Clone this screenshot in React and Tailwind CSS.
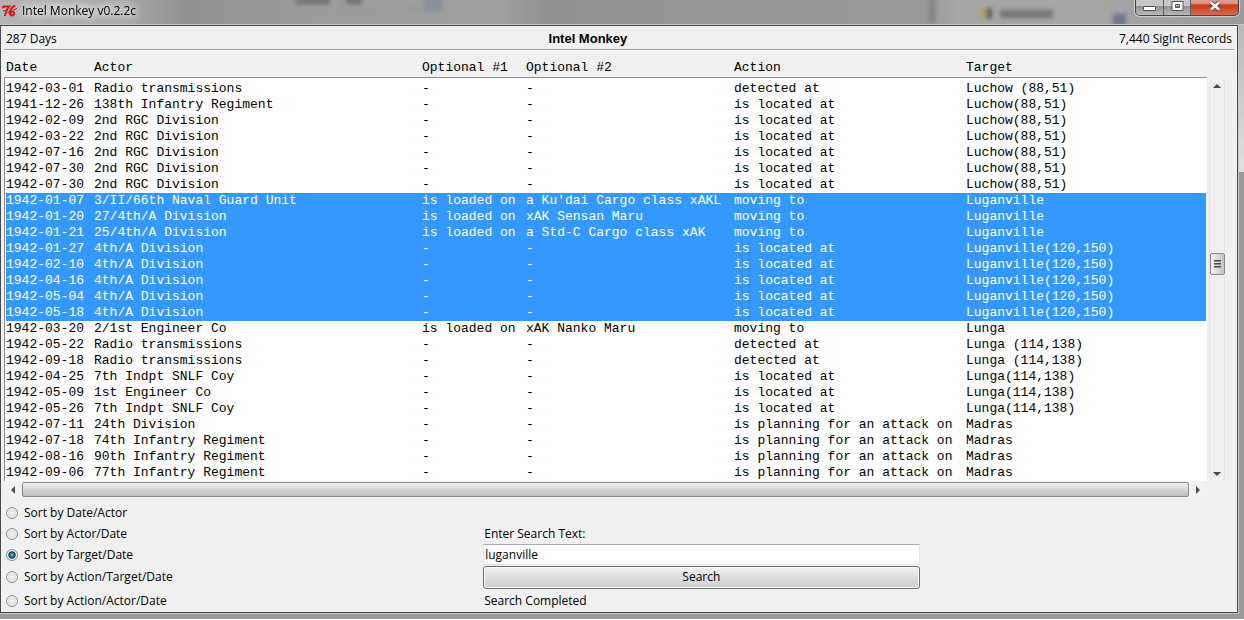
import React, { useState } from "react";

const rows = [
  ["1942-03-01", "Radio transmissions", "-", "-", "detected at", "Luchow (88,51)"],
  ["1941-12-26", "138th Infantry Regiment", "-", "-", "is located at", "Luchow(88,51)"],
  ["1942-02-09", "2nd RGC Division", "-", "-", "is located at", "Luchow(88,51)"],
  ["1942-03-22", "2nd RGC Division", "-", "-", "is located at", "Luchow(88,51)"],
  ["1942-07-16", "2nd RGC Division", "-", "-", "is located at", "Luchow(88,51)"],
  ["1942-07-30", "2nd RGC Division", "-", "-", "is located at", "Luchow(88,51)"],
  ["1942-07-30", "2nd RGC Division", "-", "-", "is located at", "Luchow(88,51)"],
  ["1942-01-07", "3/II/66th Naval Guard Unit", "is loaded on", "a Ku'dai Cargo class xAKL", "moving to", "Luganville"],
  ["1942-01-20", "27/4th/A Division", "is loaded on", "xAK Sensan Maru", "moving to", "Luganville"],
  ["1942-01-21", "25/4th/A Division", "is loaded on", "a Std-C Cargo class xAK", "moving to", "Luganville"],
  ["1942-01-27", "4th/A Division", "-", "-", "is located at", "Luganville(120,150)"],
  ["1942-02-10", "4th/A Division", "-", "-", "is located at", "Luganville(120,150)"],
  ["1942-04-16", "4th/A Division", "-", "-", "is located at", "Luganville(120,150)"],
  ["1942-05-04", "4th/A Division", "-", "-", "is located at", "Luganville(120,150)"],
  ["1942-05-18", "4th/A Division", "-", "-", "is located at", "Luganville(120,150)"],
  ["1942-03-20", "2/1st Engineer Co", "is loaded on", "xAK Nanko Maru", "moving to", "Lunga"],
  ["1942-05-22", "Radio transmissions", "-", "-", "detected at", "Lunga (114,138)"],
  ["1942-09-18", "Radio transmissions", "-", "-", "detected at", "Lunga (114,138)"],
  ["1942-04-25", "7th Indpt SNLF Coy", "-", "-", "is located at", "Lunga(114,138)"],
  ["1942-05-09", "1st Engineer Co", "-", "-", "is located at", "Lunga(114,138)"],
  ["1942-05-26", "7th Indpt SNLF Coy", "-", "-", "is located at", "Lunga(114,138)"],
  ["1942-07-11", "24th Division", "-", "-", "is planning for an attack on", "Madras"],
  ["1942-07-18", "74th Infantry Regiment", "-", "-", "is planning for an attack on", "Madras"],
  ["1942-08-16", "90th Infantry Regiment", "-", "-", "is planning for an attack on", "Madras"],
  ["1942-09-06", "77th Infantry Regiment", "-", "-", "is planning for an attack on", "Madras"],
];

const columns = ["Date", "Actor", "Optional #1", "Optional #2", "Action", "Target"];

const sorts = [
  "Sort by Date/Actor",
  "Sort by Actor/Date",
  "Sort by Target/Date",
  "Sort by Action/Target/Date",
  "Sort by Action/Actor/Date",
];

// shapes of the desktop showing through the glass
const Glass = () => (
  <svg className="absolute inset-0 w-full h-full" viewBox="0 0 1244 24" preserveAspectRatio="none">
    <defs>
      <filter id="glass" x="-50%" y="-100%" width="200%" height="300%">
        <feGaussianBlur stdDeviation="2" />
      </filter>
    </defs>
    <g filter="url(#glass)">
      <rect x="296" y="-2" width="34" height="6" fill="#555" opacity="0.6" />
      <rect x="346" y="-2" width="16" height="6" fill="#555" opacity="0.6" />
      <rect x="424" y="-2" width="18" height="13" fill="#7d8796" opacity="0.7" />
      <rect x="346" y="9" width="96" height="2" fill="#8b93a2" opacity="0.7" />
      <rect x="928" y="-2" width="8" height="26" fill="#6e6e6e" opacity="0.5" />
      <rect x="981" y="8" width="5" height="10" fill="#b3a644" opacity="0.8" />
      <rect x="986" y="8" width="6" height="11" fill="#46525c" opacity="0.8" />
      <rect x="1000" y="10" width="53" height="8" fill="#555" opacity="0.6" />
      <rect x="1113" y="14" width="13" height="12" fill="#54627a" opacity="0.7" />
    </g>
  </svg>
);

const TitleBar = () => (
  <header className="relative h-[25px] overflow-hidden border-b border-[#c4c4c4] bg-[linear-gradient(90deg,#b4b4b4_0%,#a8a8a8_10%,#929292_15%,#9a9a9a_24%,#a0a0a0_40%,#929292_44%,#9a9a9a_74%,#a6a6a6_77%,#a6a6a6_88%,#9a9a9a_100%)]">
    <Glass />
    <div className="relative flex justify-between pl-[2px] pr-[5px]">
      <div className="h-[22px] flex items-center gap-[5px]">
        <svg className="w-[15px] h-[12px]" viewBox="0 0 15 12" fill="none" stroke="#d8141c" strokeWidth="2">
          <path d="M0 3 L2 1.5 L7 1.5 C5 4 3.5 7 3 11" />
          <path d="M13 0.5 C10 2 8 5 8 8.5 C8 11.5 12 11 12 8 C12 6 9.5 6 8.5 8.5" />
          <path d="M1 6 L6 4.5 M6 8 L9 4 M11 5 L15 3.5" strokeWidth="1" />
        </svg>
        <h1 className="[text-shadow:0_0_6px_white,0_0_10px_white,0_0_14px_white]">Intel Monkey v0.2.2c</h1>
      </div>
      <div className="h-[16px] flex rounded-b-[5px] border border-t-0 border-[#42474c] overflow-hidden shadow-[0_0_1px_1px_#d0d0d0]">
        <button aria-label="Minimize" className="w-[28px] flex justify-center border-r border-[#5a5f64] bg-linear-to-b from-[#c6c6c6] from-40% via-[#8f8f8f] via-40% to-[#b9b9b9]">
          <svg width="13" height="16" viewBox="0 0 13 16">
            <rect x="0.5" y="6.5" width="12" height="4" rx="0.5" fill="#fff" stroke="#50545c" />
          </svg>
        </button>
        <button aria-label="Maximize" className="w-[27px] flex justify-center border-r border-[#5a5f64] bg-linear-to-b from-[#c6c6c6] from-40% via-[#8f8f8f] via-40% to-[#b9b9b9]">
          <svg width="13" height="16" viewBox="0 0 13 16">
            <path fillRule="evenodd" d="M1 1.5h11v9h-11z M4.5 4.5v3h4v-3z" fill="#fff" stroke="#50545c" />
          </svg>
        </button>
        <button aria-label="Close" className="w-[47px] flex justify-center bg-linear-to-b from-[#dd9a8a] from-20% via-[#c23a1c] via-35% to-[#dc6a48]">
          <svg width="14" height="16" viewBox="0 0 14 16" fill="none">
            <path d="M3 2.5 L11 9.5 M11 2.5 L3 9.5" stroke="#4f4650" strokeWidth="4.5" />
            <path d="M3 2.5 L11 9.5 M11 2.5 L3 9.5" stroke="#fff" strokeWidth="2.5" />
          </svg>
        </button>
      </div>
    </div>
  </header>
);

const Arrow = ({ label, d }) => (
  <button aria-label={label} className="w-[18px] h-[15px] shrink-0 flex items-center justify-center">
    <svg width="8" height="8" viewBox="0 0 8 8" fill="#4a4a4a">
      <path d={d} />
    </svg>
  </button>
);

const RecordTable = () => (
  <table className="w-full table-fixed border-separate border-spacing-0 text-left font-['Liberation_Mono',monospace] text-[13px] leading-[16px] whitespace-pre">
    <colgroup>
      <col className="w-[90px]" />
      <col className="w-[328px]" />
      <col className="w-[104px]" />
      <col className="w-[208px]" />
      <col className="w-[232px]" />
      <col />
    </colgroup>
    <thead>
      <tr className="h-[26px]">
        {columns.map((c) => (
          <th key={c} className="p-0 pt-[8px] font-normal first:pl-[2px]">{c}</th>
        ))}
      </tr>
    </thead>
    <tbody className="bg-white">
      <tr aria-hidden="true">
        <td colSpan={6} className="h-[4px] p-0 border-t border-l border-[#8d8d8d]" />
      </tr>
      {rows.map((r, i) => (
        <tr key={i} className={r[5].startsWith("Luganville") ? "text-white [&>td]:bg-[#3399ff]" : ""}>
          {r.map((cell, j) => (
            <td key={j} className="p-0 bg-clip-content first:border-l first:border-[#8d8d8d] first:pl-[1px] last:pr-[1px]">{cell}</td>
          ))}
        </tr>
      ))}
    </tbody>
  </table>
);

const App = () => {
  const [sort, setSort] = useState(2);
  const [text, setText] = useState("luganville");

  return (
    <div className="border-b border-white bg-[#9a9a9a] pb-[6px] font-['Open_Sans',sans-serif] text-[12px] leading-[16px] text-black">
      <TitleBar />
      <div className="bg-linear-to-b from-[#b8b8b8] from-0% via-[#e0e0e0] via-25% to-[#9a9a9a] to-25% pr-[6px]">
        <div className="border border-[#4a4a4a] bg-[#f0f0f0] px-[3px] shadow-[0_0_0_1px_#c8c8c8]">
          <div className="h-[24px] flex items-center justify-between border-b border-[#a0a0a0] px-[2px] pt-[2px]">
            <span>287 Days</span>
            <h2 className="font-['Liberation_Sans',sans-serif] font-bold text-[13px]">Intel Monkey</h2>
            <span>7,440 SigInt Records</span>
          </div>

          <div className="flex border-t border-white pr-[9px]">
            <div className="flex-1 min-w-0">
              <RecordTable />
              {/* horizontal scrollbar */}
              <div className="h-[17px] flex items-center bg-[#f2f2f2]">
                <Arrow label="Scroll left" d="M6 0 L2 4 L6 8z" />
                <div className="flex-1 h-[15px] rounded-[2px] border border-[#8b8b8b] bg-linear-to-b from-[#f4f4f4] from-0% via-[#d4d4d6] via-50% to-[#bdbdc1] to-100%" />
                <Arrow label="Scroll right" d="M2 0 L6 4 L2 8z" />
              </div>
            </div>
            {/* vertical scrollbar */}
            <div className="w-[16px] mt-[27px] mb-[17px] ml-[2px] flex flex-col items-center border-x border-[#e6e6e6] bg-[#f0f0f0]">
              <Arrow label="Scroll up" d="M0 6 L4 2 L8 6z" />
              <div className="grow-[160]" />
              <div className="w-[15px] h-[22px] shrink-0 flex flex-col items-center justify-center gap-[1px] rounded-[2px] border border-[#8b8b8b] bg-linear-to-r from-[#f5f5f5] via-[#dcdcdc] to-[#c4c4c8]">
                <i className="w-[7px] h-[2px] border-t border-[#4a4a4a] bg-[#8a8a8a]" />
                <i className="w-[7px] h-[2px] border-t border-[#4a4a4a] bg-[#8a8a8a]" />
                <i className="w-[7px] h-[2px] border-t border-[#4a4a4a] bg-[#8a8a8a]" />
              </div>
              <div className="grow-[190]" />
              <Arrow label="Scroll down" d="M0 2 L4 6 L8 2z" />
            </div>
          </div>

          <form className="mt-[4px] grid grid-cols-[480fr_437fr_315fr] grid-rows-[21px_21px_21px_24px_23px] items-center" onSubmit={(e) => e.preventDefault()}>
            {sorts.map((s, i) => (
              <label key={s} className="col-start-1 flex items-center gap-[6px] pl-[2px]">
                <input
                  type="radio"
                  name="sort"
                  checked={sort === i}
                  onChange={() => setSort(i)}
                  className="appearance-none w-[12px] h-[12px] rounded-full border border-[#8e8f8f] bg-radial from-[#f4f4f4] to-[#cfcfcf] shadow-[inset_0_0_0_1px_#f4f4f4] checked:bg-radial checked:from-[#5cc4ea] checked:from-5% checked:via-[#0b3a5c] checked:via-45% checked:to-[#d8dde0] checked:to-60%"
                />
                {s}
              </label>
            ))}
            <label htmlFor="search" className="col-start-2 row-start-2 pl-[1px]">Enter Search Text:</label>
            <input
              id="search"
              type="text"
              value={text}
              onChange={(e) => setText(e.target.value)}
              className="col-start-2 row-start-3 h-[21px] w-full border border-[#e2e3ea] border-t-[#abadb3] bg-white pl-[1px] focus:outline-none"
            />
            <button className="col-start-2 row-start-4 h-[23px] rounded-[3px] border border-[#707070] bg-linear-to-b from-[#f2f2f2] from-0% via-[#dddddd] via-50% to-[#cfcfcf] to-100% shadow-[inset_0_0_0_1px_#f8f8f8]">
              Search
            </button>
            <p className="col-start-2 row-start-5 pl-[1px]">Search Completed</p>
          </form>
        </div>
      </div>
    </div>
  );
};

export default App;
